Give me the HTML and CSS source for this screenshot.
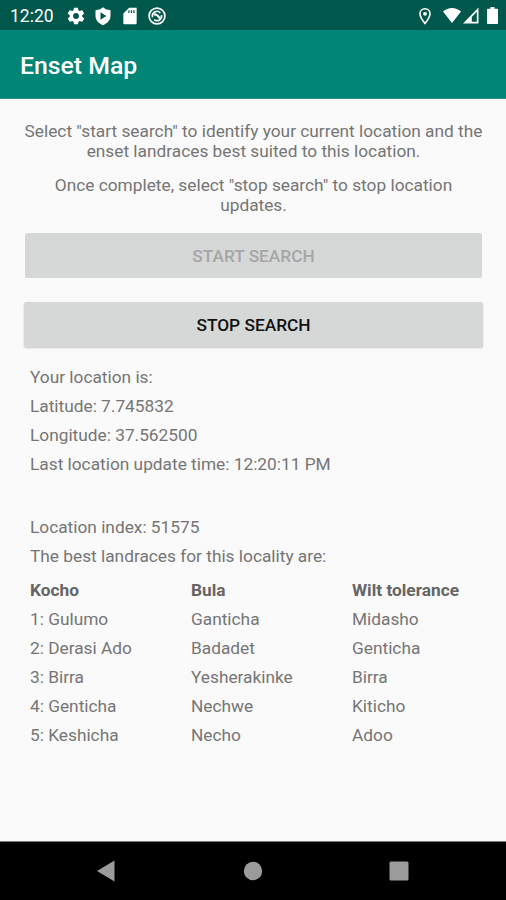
FILE: index.html
```
<!DOCTYPE html>
<html lang="en">
<head>
  <meta charset="UTF-8">
  <meta name="viewport" content="width=device-width, initial-scale=1.0">
  <title>Enset Map</title>
  <link rel="stylesheet" href="styles.css">
</head>
<body>
  <div class="status-bar">
    <span class="clock">12:20</span>
    <div class="notifications">
      <svg width="20" height="20" viewBox="0 0 24 24"><path fill="#fff" d="M19.4 13c0-.3.1-.6.1-1s0-.7-.1-1l2.100-1.600c.2-.2.2-.4.1-.6l-2-3.500c-.1-.2-.4-.3-.6-.2l-2.500 1c-.5-.4-1.100-.7-1.700-1l-.4-2.600c0-.3-.2-.5-.5-.5h-4c-.3 0-.5.2-.5.500l-.4 2.600c-.6.3-1.200.6-1.700 1l-2.500-1c-.2-.1-.5 0-.6.2l-2 3.500c-.1.2-.1.5.1.6L4.500 11c0 .3-.1.700-.1 1s0 .7.1 1l-2.100 1.600c-.2.2-.2.4-.1.600l2 3.500c.1.200.4.300.6.200l2.500-1c.5.400 1.100.700 1.700 1l.4 2.600c0 .3.200.5.500.5h4c.3 0 .5-.2.500-.5l.4-2.600c.6-.3 1.200-.6 1.700-1l2.500 1c.2.100.5 0 .6-.2l2-3.500c.1-.2.1-.5-.1-.6zM12 15.500a3.500 3.500 0 1 1 0-7 3.500 3.500 0 0 1 0 7z"/></svg>
      <svg width="20" height="20" viewBox="0 0 24 24"><path fill="#fff" fill-rule="evenodd" d="M12 1.500 8.500 4 3 5v7c0 5 4 9 9 11 5-2 9-6 9-11V5l-5.500-1zM9 7.500v9l7-4.500z"/></svg>
      <svg width="20" height="20" viewBox="0 0 24 24"><path fill="#fff" fill-rule="evenodd" d="M20 2h-9L4 9v11.500C4 21.500 4.500 22 5.500 22h13c1 0 1.500-.5 1.500-1.500zM10 5h1.500v3.500H10zm3 0h1.500v3.500H13zm3 0h1.500v3.500H16z"/></svg>
      <svg width="20" height="20" viewBox="0 0 24 24" fill="none" stroke="#fff"><circle cx="12" cy="12" r="9.500" stroke-width="2"/><path stroke-width="2" d="M6.700 13.500A5.500 5.500 0 0 1 16 8.200M17.400 11A5.500 5.500 0 0 1 8.500 16.300"/><path stroke-width="2.600" d="M8.500 11.200c1.500-1.700 3-1.200 4 .3l4 4"/></svg>
    </div>
    <div class="system-icons">
      <svg class="pin" width="18" height="20" viewBox="0 0 18 20" fill="none" stroke="#fff"><path stroke-width="1.600" d="M9 2.800c-3 0-5 2.200-5 5C4 11.500 9 17.500 9 17.500s5-6 5-9.700c0-2.800-2-5-5-5z"/><circle cx="9" cy="7.800" r="1.900" fill="#fff" stroke="none"/></svg>
      <svg class="wifi" width="18" height="17" viewBox="0 0 18 17"><path fill="#fff" d="M0 4.500C5-.2 13-.2 18 4.500L9 16z"/></svg>
      <svg class="signal" width="16" height="17" viewBox="0 0 16 17"><path fill="#fff" fill-rule="evenodd" d="M0 16.500 15.500.5v16zM8.800 14.800h5V4.700l-5 5.200z"/></svg>
      <svg class="battery" width="11" height="17" viewBox="0 0 11 17"><path fill="#fff" d="M3.500 0h4v1.800H10c.6 0 1 .4 1 1V16c0 .6-.4 1-1 1H1c-.6 0-1-.4-1-1V2.800c0-.6.4-1 1-1h2.500z"/></svg>
    </div>
  </div>

  <header class="app-bar">
    <h1>Enset Map</h1>
  </header>

  <main class="content">
    <p class="hint">Select "start search" to identify your current location and the enset landraces best suited to this location.</p>
    <p class="hint">Once complete, select "stop search" to stop location updates.</p>

    <button class="btn btn-start" disabled>START SEARCH</button>
    <button class="btn btn-stop">STOP SEARCH</button>

    <div class="info location">
      <p>Your location is:</p>
      <p>Latitude: 7.745832</p>
      <p>Longitude: 37.562500</p>
      <p>Last location update time: 12:20:11 PM</p>
    </div>

    <div class="info">
      <p>Location index: 51575</p>
      <p>The best landraces for this locality are:</p>
    </div>

    <table class="landraces">
      <tr><th>Kocho</th><th>Bula</th><th>Wilt tolerance</th></tr>
      <tr><td>1: Gulumo</td><td>Ganticha</td><td>Midasho</td></tr>
      <tr><td>2: Derasi Ado</td><td>Badadet</td><td>Genticha</td></tr>
      <tr><td>3: Birra</td><td>Yesherakinke</td><td>Birra</td></tr>
      <tr><td>4: Genticha</td><td>Nechwe</td><td>Kiticho</td></tr>
      <tr><td>5: Keshicha</td><td>Necho</td><td>Adoo</td></tr>
    </table>
  </main>

  <nav class="nav-bar">
    <svg width="20" height="24" viewBox="0 0 20 24"><path fill="#9b9b9b" d="M1 12 18.500 1.500v21z"/></svg>
    <svg width="20" height="24" viewBox="0 0 20 24"><circle cx="10" cy="12" r="9.200" fill="#9b9b9b"/></svg>
    <svg width="20" height="24" viewBox="0 0 20 24"><rect x=".5" y="2.500" width="19" height="19" rx="1.500" fill="#9b9b9b"/></svg>
  </nav>
</body>
</html>
```
FILE: styles.css
```
* {
  box-sizing: border-box;
}

body {
  font-family: Roboto, sans-serif;
  font-size: 17.3px;
  color: #757575;
  margin: 0;
  height: 900px;
  display: flex;
  flex-direction: column;
  background-color: #fafafa;
  overflow: hidden;
}

.status-bar {
  height: 30px;
  display: flex;
  align-items: center;
  padding: 1px 8px 0 10px;
  background-color: #00574b;
  color: white;
}

.clock {
  width: 56px;
  font-size: 17.5px;
}

.notifications {
  display: flex;
  gap: 7px;
}

.system-icons {
  display: flex;
  align-items: center;
  margin-left: auto;
}

.wifi {
  margin-left: 9px;
}

.signal {
  margin-left: 2px;
}

.battery {
  margin-left: 8px;
}

.app-bar {
  height: 69px;
  display: flex;
  align-items: center;
  padding: 3px 20px 0;
  background-color: #008577;
  border-bottom: 1px solid #2b8f83;
}

h1 {
  margin: 0;
  font-size: 24.8px;
  font-weight: 500;
  color: white;
}

.content {
  flex: 1;
  padding: 22px 20px 0;
}

.hint {
  margin: 0 0 13px;
  padding: 0 2px 0 3px;
  line-height: 20.3px;
  text-align: center;
}

.btn {
  display: block;
  width: 457px;
  height: 45px;
  margin: 0 auto;
  padding: 0 0 0 1px;
  border: none;
  border-radius: 2px;
  background-color: #d6d7d7;
  font-family: Roboto, sans-serif;
  font-size: 17.3px;
  font-weight: 500;
}

.btn-start {
  margin-top: 18px;
  color: #a5a6a6;
}

.btn-stop {
  width: 459px;
  margin-top: 24px;
  color: #111;
  box-shadow: 0 1px 2px rgba(0, 0, 0, 0.2);
}

.info {
  padding: 0 10px;
}

.info p {
  margin: 0;
  line-height: 29px;
}

.location {
  margin: 16px 0 34px;
}

.landraces {
  width: 100%;
  margin-top: 4px;
  padding-left: 10px;
  table-layout: fixed;
  border-spacing: 0;
}

.landraces th,
.landraces td {
  width: 161px;
  height: 29px;
  padding: 0;
  text-align: left;
}

.landraces th:last-child,
.landraces td:last-child {
  width: auto;
}

.landraces th {
  font-weight: bold;
  color: #656565;
}

.nav-bar {
  height: 59px;
  display: flex;
  align-items: center;
  justify-content: space-between;
  padding: 0 97px 0 96px;
  background-color: black;
  border-top: 1px solid #777;
}
```
